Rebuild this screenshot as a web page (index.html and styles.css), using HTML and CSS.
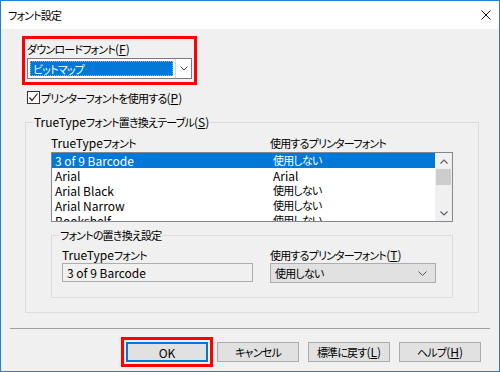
FILE: index.html
```html
<!DOCTYPE html>
<html lang="ja">
<head>
<meta charset="utf-8">
<title>フォント設定</title>
<link rel="stylesheet" href="styles.css">
</head>
<body>
<div class="window">
  <div class="titlebar">
    <span class="title j">フォント設定</span>
    <svg class="close" width="10" height="10" viewBox="0 0 10 10"><path d="M0.5 0.5L9.5 9.5M9.5 0.5L0.5 9.5" stroke="#111" stroke-width="1" fill="none"/></svg>
  </div>
  <div class="body">
    <div class="download">
      <div class="label"><span class="j">ダウンロードフォント</span>(<u>F</u>)</div>
      <div class="combo">
        <div class="combo-field"><span class="sel"><span class="j">ビットマップ</span></span></div>
        <div class="combo-btn"><svg width="8" height="5" viewBox="0 0 8 5"><path d="M0.5 0.5L4 4L7.5 0.5" stroke="#333" fill="none"/></svg></div>
      </div>
    </div>
    <div class="check">
      <span class="box"><svg width="11" height="11" viewBox="0 0 11 11"><path d="M1.5 5.5L4 8.5L9.5 1.5" stroke="#222" stroke-width="1.2" fill="none"/></svg></span>
      <span><span class="j">プリンターフォントを使用する</span>(<u>P</u>)</span>
    </div>
    <div class="group outer">
      <span class="group-title">TrueType<span class="j">フォント置き換えテーブル</span>(<u>S</u>)</span>
      <div class="cols"><span>TrueType<span class="j">フォント</span></span><span class="j">使用するプリンターフォント</span></div>
      <div class="list">
        <div class="rows">
          <div class="row selected"><span>3 of 9 Barcode</span><span class="j">使用しない</span></div>
          <div class="row"><span>Arial</span><span>Arial</span></div>
          <div class="row"><span>Arial Black</span><span class="j">使用しない</span></div>
          <div class="row"><span>Arial Narrow</span><span class="j">使用しない</span></div>
          <div class="row"><span>Bookshelf</span><span class="j">使用しない</span></div>
        </div>
        <div class="scrollbar">
          <div class="arrow"><svg width="8" height="5" viewBox="0 0 8 5"><path d="M0.5 4.5L4 1L7.5 4.5" stroke="#606060" stroke-width="1.2" fill="none"/></svg></div>
          <div class="thumb"></div>
          <div class="track"></div>
          <div class="arrow"><svg width="8" height="5" viewBox="0 0 8 5"><path d="M0.5 0.5L4 4L7.5 0.5" stroke="#606060" stroke-width="1.2" fill="none"/></svg></div>
        </div>
      </div>
      <div class="group inner">
        <span class="group-title j">フォントの置き換え設定</span>
        <div class="fields">
          <div class="field f1">
            <div class="flabel">TrueType<span class="j">フォント</span></div>
            <div class="textbox">3 of 9 Barcode</div>
          </div>
          <div class="field f2">
            <div class="flabel"><span class="j">使用するプリンターフォント</span>(<u>T</u>)</div>
            <div class="dropdown"><span class="j">使用しない</span><svg width="9" height="5" viewBox="0 0 9 5"><path d="M0.5 0.5L4.5 4.5L8.5 0.5" stroke="#555" fill="none"/></svg></div>
          </div>
        </div>
      </div>
    </div>
    <div class="separator"></div>
    <div class="buttons">
      <button class="btn default">OK</button>
      <button class="btn"><span class="j">キャンセル</span></button>
      <button class="btn"><span class="j">標準に戻す</span>(<u>L</u>)</button>
      <button class="btn"><span class="j">ヘルプ</span>(<u>H</u>)</button>
    </div>
  </div>
</div>
</body>
</html>
```
FILE: styles.css
```css
* { box-sizing: border-box; }
html, body { margin: 0; padding: 0; }
body {
  width: 500px;
  height: 372px;
  font-family: "Noto Sans CJK JP", "Noto Sans", sans-serif;
  font-size: 12px;
  font-feature-settings: "palt" 1;
  color: #000;
  background: #fff;
}
.j {
  font-size: 11px;
  letter-spacing: -0.8px;
}
u { text-decoration: underline; text-underline-offset: 1px; }
.window {
  width: 500px;
  height: 372px;
  border: 1px solid #1883d7;
  display: flex;
  flex-direction: column;
}
.titlebar {
  height: 28px;
  background: #fff;
  display: flex;
  align-items: center;
  justify-content: space-between;
  padding: 0 8px 0 7px;
  flex: none;
}
.title { line-height: 16px; }
.close { display: block; }
.body {
  flex: 1;
  background: #f0f0f0;
  display: flex;
  flex-direction: column;
  align-items: flex-start;
}
.download {
  margin: 7px 0 0 21px;
  width: 175px;
  border: 3px solid #f00;
  padding: 2px 2px 3px 2px;
}
.label { line-height: 16px; height: 16px; margin-bottom: 1px; }
.combo {
  height: 21px;
  border: 1px solid #7a7a7a;
  background: #fff;
  display: flex;
}
.combo-field {
  flex: 1;
  padding: 2px;
  display: flex;
  border-right: 1px solid #d9d9d9;
}
.sel {
  flex: 1;
  background: #0078d7;
  color: #fff;
  line-height: 15px;
  padding-left: 3px;
  outline: 1px dotted #f0a050;
  outline-offset: -1px;
}
.combo-btn {
  width: 15px;
  display: flex;
  align-items: center;
  justify-content: center;
}
.combo-btn svg { display: block; }
.check {
  margin: 6px 0 0 26px;
  display: flex;
  align-items: center;
  height: 13px;
  line-height: 13px;
}
.box {
  width: 13px;
  height: 13px;
  border: 1px solid #333;
  background: #fff;
  display: flex;
  align-items: center;
  justify-content: center;
  margin-right: 1px;
}
.box svg { display: block; }
.group {
  border: 1px solid #dcdcdc;
  position: relative;
}
.group-title {
  position: absolute;
  top: -9px;
  line-height: 16px;
  background: #f0f0f0;
  padding: 0 1px;
}
.outer {
  margin: 18px 0 0 24px;
  width: 454px;
  height: 191px;
  padding: 12px 25px 0 25px;
}
.outer > .group-title { left: 7px; }
.cols {
  display: grid;
  grid-template-columns: 219px 1fr;
  line-height: 16px;
  height: 16px;
}
.list {
  margin-top: 1px;
  height: 70px;
  border: 1px solid #828790;
  background: #fff;
  display: flex;
  overflow: hidden;
}
.rows { flex: 1; overflow: hidden; }
.row {
  display: grid;
  grid-template-columns: 218px 1fr;
  height: 15px;
  line-height: 15px;
}
.row span { padding-left: 3px; }
.row.selected { background: #0078d7; color: #fff; }
.scrollbar {
  width: 17px;
  background: #f0f0f0;
  display: flex;
  flex-direction: column;
}
.arrow {
  height: 16px;
  display: flex;
  align-items: center;
  justify-content: center;
}
.arrow svg { display: block; }
.thumb {
  height: 16px;
  margin: 0 1px;
  background: #cdcdcd;
}
.track { flex: 1; }
.inner {
  margin-top: 13px;
  height: 63px;
  padding: 11px 0 0 10px;
}
.inner > .group-title { left: 7px; }
.fields { display: flex; }
.f1 { width: 208px; }
.flabel { line-height: 16px; height: 16px; }
.textbox {
  width: 191px;
  height: 19px;
  border: 1px solid #adadad;
  background: #f0f0f0;
  line-height: 17px;
  padding-left: 4px;
}
.dropdown {
  width: 166px;
  height: 20px;
  border: 1px solid #adadad;
  background: #e1e1e1;
  display: flex;
  align-items: center;
  justify-content: space-between;
  padding: 0 8px 0 4px;
  line-height: 18px;
}
.dropdown svg { display: block; }
.separator {
  margin: 15px 9px 0 9px;
  align-self: stretch;
  height: 1px;
  background: #a0a0a0;
}
.buttons {
  margin-top: 13px;
  align-self: stretch;
  display: flex;
  justify-content: flex-end;
  gap: 9px;
  padding-right: 18px;
}
.btn {
  width: 82px;
  height: 20px;
  border: 1px solid #adadad;
  background: #e1e1e1;
  font-family: inherit;
  font-size: 12px;
  font-feature-settings: "palt" 1;
  color: #000;
  padding: 0;
  line-height: 18px;
  margin: 0;
}
.btn.default {
  border: 2px solid #0078d7;
  outline: 3px solid #f00;
  outline-offset: 2px;
}
```
